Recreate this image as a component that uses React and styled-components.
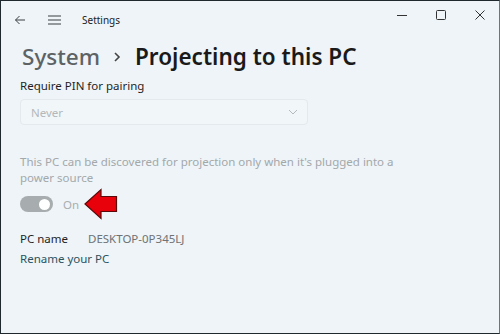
import React from 'react'
import styled, { createGlobalStyle } from 'styled-components'

const Global = createGlobalStyle`
    html, body {
        margin: 0;
        padding: 0;
        background: #eef4f7;
    }
    * {
        box-sizing: border-box;
    }
`

const App = () => {
    return (
        <>
            <Global />
            <Window>
                <TitleBar>
                    <NavIcon>
                        <svg width="12" height="10" viewBox="0 0 12 10">
                            <path d="M11 5H1.5M5.5 1L1.5 5l4 4" stroke="#3a3f42" strokeWidth="1" fill="none" />
                        </svg>
                    </NavIcon>
                    <NavIcon>
                        <svg width="13" height="10" viewBox="0 0 13 10">
                            <path d="M0 1h13M0 5h13M0 9h13" stroke="#3a3f42" strokeWidth="1" fill="none" />
                        </svg>
                    </NavIcon>
                    <AppName>Settings</AppName>
                    <Controls>
                        <CtrlButton>
                            <svg width="10" height="10" viewBox="0 0 10 10">
                                <path d="M0 5.5h10" stroke="#333" strokeWidth="1" />
                            </svg>
                        </CtrlButton>
                        <CtrlButton>
                            <svg width="10" height="10" viewBox="0 0 10 10">
                                <rect x="0.5" y="0.5" width="9" height="9" rx="1" stroke="#333" fill="none" />
                            </svg>
                        </CtrlButton>
                        <CtrlButton>
                            <svg width="10" height="10" viewBox="0 0 10 10">
                                <path d="M0.5 0.5l9 9M9.5 0.5l-9 9" stroke="#333" strokeWidth="1" />
                            </svg>
                        </CtrlButton>
                    </Controls>
                </TitleBar>

                <Heading>
                    <Crumb>System</Crumb>
                    <Chevron>
                        <svg width="8" height="12" viewBox="0 0 8 12">
                            <path d="M2 2l4 4-4 4" stroke="#444" strokeWidth="1.6" fill="none" />
                        </svg>
                    </Chevron>
                    <Current>Projecting to this PC</Current>
                </Heading>

                <Content>
                    <Label>Require PIN for pairing</Label>
                    <Select>
                        <span>Never</span>
                        <svg width="10" height="6" viewBox="0 0 10 6">
                            <path d="M1 1l4 4 4-4" stroke="#b5babd" strokeWidth="1" fill="none" />
                        </svg>
                    </Select>

                    <Note>
                        This PC can be discovered for projection only when it's plugged into a
                        power source
                    </Note>

                    <ToggleRow>
                        <Toggle>
                            <Knob />
                        </Toggle>
                        <ToggleText>On</ToggleText>
                        <Arrow>
                            <svg width="34" height="32" viewBox="0 0 34 32">
                                <path
                                    d="M1 16L17 1.5V8.5H32.5V23.5H17V30.5Z"
                                    fill="#e8000b"
                                    stroke="#5a0a0a"
                                    strokeWidth="1.2"
                                    strokeLinejoin="miter"
                                />
                            </svg>
                        </Arrow>
                    </ToggleRow>

                    <InfoRow>
                        <InfoKey>PC name</InfoKey>
                        <InfoValue>DESKTOP-0P345LJ</InfoValue>
                    </InfoRow>
                    <Link>Rename your PC</Link>
                </Content>
            </Window>
        </>
    )
}

export default App

const Window = styled.div`
    width: 500px;
    height: 334px;
    background: #eef4f7;
    border: 1px solid #1f282c;
    border-right-color: #6d7579;
    font-family: 'Noto Sans', 'Open Sans', sans-serif;
    color: #1b1b1b;
    overflow: hidden;
`

const TitleBar = styled.div`
    height: 38px;
    display: flex;
    align-items: center;
    padding-left: 12px;
`

const NavIcon = styled.div`
    width: 34px;
    display: flex;
    align-items: center;
    justify-content: flex-start;
    padding-left: 1px;
    margin-top: -1px;
`

const AppName = styled.span`
    font-size: 10px;
    color: #222;
    margin-left: 1px;
    margin-top: -1px;
`

const Controls = styled.div`
    margin-left: auto;
    align-self: flex-start;
    display: flex;
    height: 28px;
`

const CtrlButton = styled.div`
    width: 39px;
    display: flex;
    align-items: center;
    justify-content: center;
`

const Heading = styled.h1`
    margin: 0 0 0 21px;
    display: flex;
    align-items: center;
    font-size: 22.5px;
    font-weight: 600;
    height: 34px;
`

const Crumb = styled.span`
    color: #5d6265;
    font-weight: 500;
`

const Chevron = styled.span`
    display: flex;
    margin: 2px 14px 0 13px;
`

const Current = styled.span`
    color: #1a1a1a;
`

const Content = styled.div`
    padding: 0 19px;
    position: relative;
`

const Label = styled.div`
    font-size: 11.5px;
    color: #1f1f1f;
    margin-top: 5px;
`

const Select = styled.div`
    width: 288px;
    height: 26px;
    margin-top: 6px;
    border: 1px solid #e3e9ec;
    border-radius: 4px;
    background: #f1f6f8;
    display: flex;
    align-items: center;
    justify-content: space-between;
    padding: 0 9px 0 10px;
    font-size: 11.5px;
    color: #b3b8bb;
`

const Note = styled.p`
    margin: 29px 0 0;
    font-size: 11.5px;
    line-height: 16px;
    color: #a3a8ab;
    width: 380px;
`

const ToggleRow = styled.div`
    display: flex;
    align-items: center;
    margin-top: 8px;
    height: 20px;
    position: relative;
`

const Toggle = styled.div`
    width: 33px;
    height: 16px;
    border-radius: 8px;
    background: #a7acae;
    display: flex;
    align-items: center;
    justify-content: flex-end;
    padding-right: 3px;
`

const Knob = styled.div`
    width: 11px;
    height: 11px;
    border-radius: 50%;
    background: #fff;
`

const ToggleText = styled.span`
    margin-left: 10px;
    font-size: 11.5px;
    color: #a9aeb1;
`

const Arrow = styled.div`
    position: absolute;
    left: 64px;
    top: -6px;
    display: flex;
`

const InfoRow = styled.div`
    display: flex;
    margin-top: 17px;
    font-size: 11.5px;
`

const InfoKey = styled.span`
    width: 68px;
    color: #1f1f1f;
`

const InfoValue = styled.span`
    color: #6d7275;
`

const Link = styled.div`
    margin-top: 5px;
    font-size: 11.5px;
    color: #2a5360;
`
